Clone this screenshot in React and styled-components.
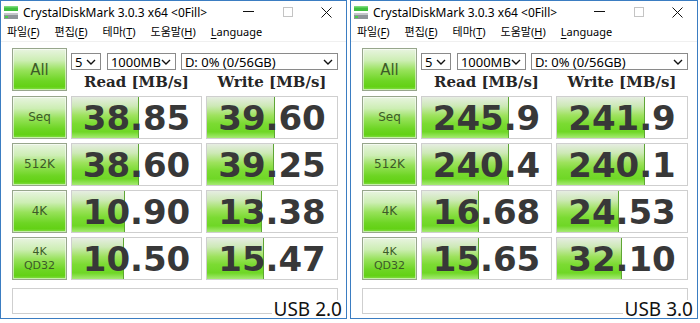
import React from 'react';
import styled, { createGlobalStyle } from 'styled-components';

const Global = createGlobalStyle`
  html, body { margin: 0; padding: 0; background: #ffffff; }
  body { font-family: "Noto Sans", "Noto Sans CJK KR", sans-serif; }
`;

const Screen = styled.div`
  display: flex;
  align-items: flex-start;
  gap: 3px;
  width: 700px;
  height: 323px;
  overflow: hidden;
`;

const Win = styled.div`
  position: relative;
  box-sizing: border-box;
  width: ${p => p.$w}px;
  height: 319px;
  border: 1px solid #3b7dc2;
  background: #ffffff;
  display: flex;
  flex-direction: column;
`;

const TitleBar = styled.div`
  height: 22px;
  display: flex;
  align-items: center;
  padding-left: 2px;
`;

const Title = styled.div`
  font-family: "Noto Sans", sans-serif;
  font-size: 12px;
  color: #000;
  margin-left: 4px;
  flex: 1;
  white-space: nowrap;
`;

const Caption = styled.div`
  width: 39px;
  height: 22px;
  display: flex;
  align-items: center;
  justify-content: center;
`;

const MenuBar = styled.div`
  height: 18px;
  display: flex;
  align-items: center;
  gap: 15px;
  padding-left: 6px;
  font-family: "Noto Sans", "Noto Sans CJK KR", sans-serif;
  font-size: 11px;
  color: #000;
  border-bottom: 1px solid #f0f0f0;
`;

const MenuItem = styled.span`
  white-space: nowrap;
  line-height: 18px;
  u { text-decoration-thickness: 1px; text-underline-offset: 2px; }
`;

const Content = styled.div`
  padding: 6px 0 0 11px;
  display: flex;
  flex-direction: column;
`;

const Grid = styled.div`
  display: grid;
  grid-template-columns: 55px 131px 132px;
  column-gap: 4px;
`;

const TopGrid = styled(Grid)`
  grid-template-rows: 22px 21px;
`;

const SideButton = styled.div`
  box-sizing: border-box;
  border: 1px solid #97a68c;
  box-shadow: inset 0 0 0 1px rgba(255, 255, 255, 0.55);
  background: linear-gradient(to bottom, #e8f4e0 0%, #cdeeb4 28%, #97e25a 52%, #6dd523 78%, #63d115 92%, #86de4a 100%);
  display: flex;
  flex-direction: column;
  align-items: center;
  justify-content: center;
  font-family: "DejaVu Sans", sans-serif;
  font-size: ${p => p.$size || 12}px;
  line-height: ${p => (p.$size || 12) + 3}px;
  color: #3c5a28;
  grid-row: ${p => p.$rows || 'auto'};
`;

const Selects = styled.div`
  grid-column: 2 / 4;
  display: flex;
  align-items: flex-start;
  padding-top: 5px;
`;

const Select = styled.div`
  box-sizing: border-box;
  width: ${p => p.$w}px;
  margin-left: ${p => p.$ml || 0}px;
  height: 17px;
  border: 1px solid #8a8a8a;
  background: #fff;
  display: flex;
  align-items: center;
  justify-content: space-between;
  padding: 0 4px 0 3px;
  font-family: "Noto Sans", sans-serif;
  font-size: 13px;
  color: #000;
  white-space: nowrap;
`;

const Header = styled.div`
  grid-column: ${p => p.$col};
  grid-row: 2;
  text-align: center;
  font-family: "DejaVu Serif", serif;
  font-weight: bold;
  font-size: 15px;
  line-height: 20px;
  padding-top: 2px;
  color: #262626;
  white-space: nowrap;
`;

const Rows = styled(Grid)`
  margin-top: 5px;
  grid-auto-rows: 43px;
  row-gap: 4px;
`;

const ValueBox = styled.div`
  position: relative;
  box-sizing: border-box;
  border: 1px solid #cfcfcf;
  background: #fff;
  overflow: hidden;
  display: flex;
  align-items: center;
  justify-content: center;
`;

const Fill = styled.div`
  position: absolute;
  left: 0;
  top: 0;
  bottom: 0;
  box-sizing: border-box;
  border-right: 1px solid #5ea634;
  background: linear-gradient(to bottom, #e6ede2 0%, #cde9b6 22%, #9ee25e 45%, #7bdb32 65%, #6fd726 85%, #a6ea74 100%);
`;

const Number = styled.span`
  position: relative;
  font-family: "DejaVu Sans", sans-serif;
  font-weight: bold;
  font-size: 34px;
  line-height: 40px;
  color: #383838;
  letter-spacing: 0;
`;

const Comment = styled.div`
  box-sizing: border-box;
  margin-top: 8px;
  width: 326px;
  height: 26px;
  border: 1px solid #cfcfcf;
  background: #fff;
`;

const Label = styled.div`
  position: absolute;
  right: 3px;
  bottom: 0;
  background: #fff;
  padding: 0 1px 0 2px;
  font-family: "Noto Sans", sans-serif;
  font-size: 19px;
  line-height: 18px;
  color: #111;
  white-space: nowrap;
`;

const AppIcon = () => (
  <svg width="16" height="15" viewBox="0 0 16 15">
    <rect x="1" y="1" width="14" height="5" fill="#3fbf3f" />
    <rect x="1" y="1" width="14" height="1.5" fill="#7ddc7d" />
    <rect x="1" y="8" width="14" height="6" fill="#8e9499" />
    <rect x="1" y="8" width="14" height="2" fill="#c3c7ca" />
    <rect x="2" y="11" width="3" height="2" fill="#4ccc4c" />
  </svg>
);

const Chevron = () => (
  <svg width="10" height="6" viewBox="0 0 10 6">
    <polyline points="1,1 5,5 9,1" fill="none" stroke="#111" strokeWidth="1.4" />
  </svg>
);

const Mnemonic = ({ text, k }) => (
  <MenuItem>
    {text}(<u>{k}</u>)
  </MenuItem>
);

const meter = v => Math.max(0, Math.min(1, 0.2 * Math.log10(v * 10)));

const CdmWindow = ({ w, data, label }) => (
  <Win $w={w}>
    <TitleBar>
      <AppIcon />
      <Title>CrystalDiskMark 3.0.3 x64 &lt;0Fill&gt;</Title>
      <Caption>
        <svg width="11" height="2" viewBox="0 0 11 2"><rect width="11" height="1" fill="#111" /></svg>
      </Caption>
      <Caption>
        <svg width="10" height="10" viewBox="0 0 10 10"><rect x="0.5" y="0.5" width="9" height="9" fill="none" stroke="#c4c4c4" /></svg>
      </Caption>
      <Caption>
        <svg width="11" height="11" viewBox="0 0 11 11">
          <path d="M0.5 0.5 L10.5 10.5 M10.5 0.5 L0.5 10.5" stroke="#111" strokeWidth="1" />
        </svg>
      </Caption>
    </TitleBar>
    <MenuBar>
      <Mnemonic text="파일" k="F" />
      <Mnemonic text="편집" k="E" />
      <Mnemonic text="테마" k="T" />
      <Mnemonic text="도움말" k="H" />
      <MenuItem><u>L</u>anguage</MenuItem>
    </MenuBar>
    <Content>
      <TopGrid>
        <SideButton $rows="1 / 3" $size={15}>All</SideButton>
        <Selects>
          <Select $w={30}>5<Chevron /></Select>
          <Select $w={69} $ml={6}>1000MB<Chevron /></Select>
          <Select $w={158} $ml={5}>D: 0% (0/56GB)<Chevron /></Select>
        </Selects>
        <Header $col={2}>Read [MB/s]</Header>
        <Header $col={3}>Write [MB/s]</Header>
      </TopGrid>
      <Rows>
        {data.map(row => (
          <React.Fragment key={row.label.join('')}>
            <SideButton $size={row.label.length > 1 ? 11 : 12}>
              {row.label.map(l => <span key={l}>{l}</span>)}
            </SideButton>
            <ValueBox>
              <Fill style={{ width: `${meter(parseFloat(row.r)) * 100}%` }} />
              <Number>{row.r}</Number>
            </ValueBox>
            <ValueBox>
              <Fill style={{ width: `${meter(parseFloat(row.w)) * 100}%` }} />
              <Number>{row.w}</Number>
            </ValueBox>
          </React.Fragment>
        ))}
      </Rows>
      <Comment />
    </Content>
    <Label>{label}</Label>
  </Win>
);

const usb2 = [
  { label: ['Seq'], r: '38.85', w: '39.60' },
  { label: ['512K'], r: '38.60', w: '39.25' },
  { label: ['4K'], r: '10.90', w: '13.38' },
  { label: ['4K', 'QD32'], r: '10.50', w: '15.47' },
];

const usb3 = [
  { label: ['Seq'], r: '245.9', w: '241.9' },
  { label: ['512K'], r: '240.4', w: '240.1' },
  { label: ['4K'], r: '16.68', w: '24.53' },
  { label: ['4K', 'QD32'], r: '15.65', w: '32.10' },
];

export default function App() {
  return (
    <>
      <Global />
      <Screen>
        <CdmWindow w={347} data={usb2} label="USB 2.0" />
        <CdmWindow w={348} data={usb3} label="USB 3.0" />
      </Screen>
    </>
  );
}
